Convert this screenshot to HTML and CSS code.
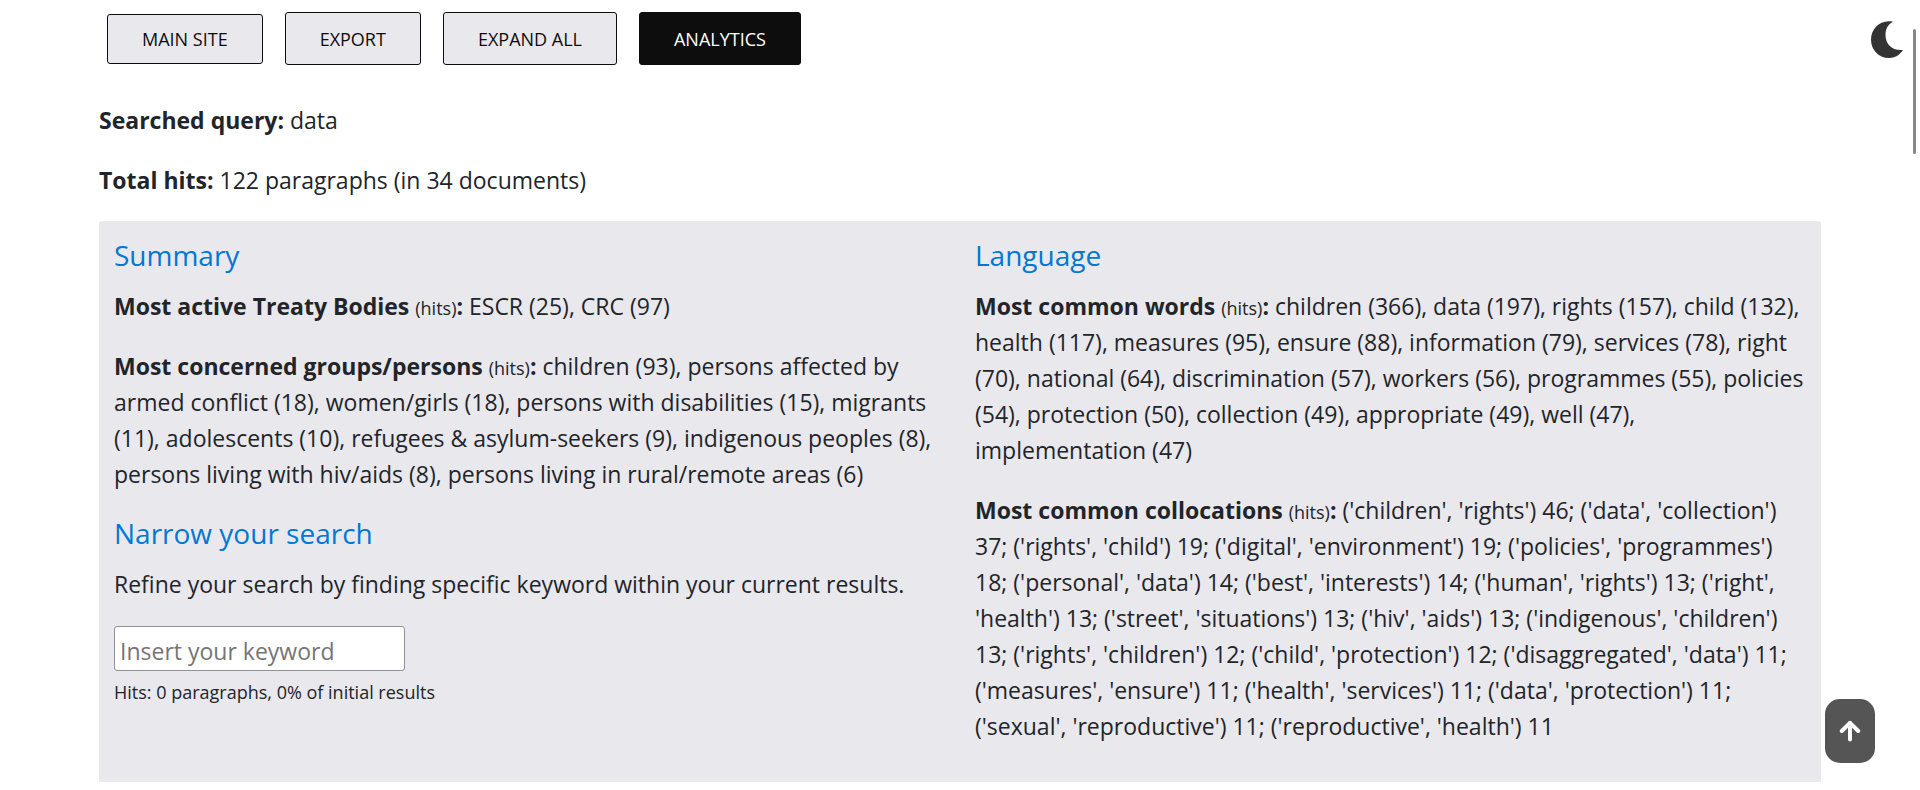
FILE: index.html
```html
<!DOCTYPE html>
<html lang="en">
<head>
<meta charset="utf-8">
<title>Search results: data</title>
<link rel="stylesheet" href="styles.css">
</head>
<body>
<nav class="toolbar">
  <a class="btn btn-link" href="#">MAIN SITE</a>
  <button class="btn" type="button">EXPORT</button>
  <button class="btn" type="button">EXPAND ALL</button>
  <button class="btn btn-active" type="button">ANALYTICS</button>
</nav>
<main class="results">
  <div class="query">
    <p><b>Searched query:</b> data</p>
    <p><b>Total hits:</b> 122 paragraphs (in 34 documents)</p>
  </div>
  <div class="panel">
    <section class="column">
      <h2>Summary</h2>
      <p><b>Most active Treaty Bodies <small>(hits)</small>:</b> ESCR (25), CRC (97)</p>
      <p><b>Most concerned groups/persons <small>(hits)</small>:</b> children (93), persons affected by<br>armed conflict (18), women/girls (18), persons with disabilities (15), migrants<br>(11), adolescents (10), refugees &amp; asylum-seekers (9), indigenous peoples (8),<br>persons living with hiv/aids (8), persons living in rural/remote areas (6)</p>
      <h2>Narrow your search</h2>
      <p><label for="keyword">Refine your search by finding specific keyword within your current results.</label></p>
      <input class="keyword" id="keyword" type="text" placeholder="Insert your keyword">
      <p class="hits">Hits: 0 paragraphs, 0% of initial results</p>
    </section>
    <section class="column">
      <h2>Language</h2>
      <p><b>Most common words <small>(hits)</small>:</b> children (366), data (197), rights (157), child (132),<br>health (117), measures (95), ensure (88), information (79), services (78), right<br>(70), national (64), discrimination (57), workers (56), programmes (55), policies<br>(54), protection (50), collection (49), appropriate (49), well (47),<br>implementation (47)</p>
      <p><b>Most common collocations <small>(hits)</small>:</b> ('children', 'rights') 46; ('data', 'collection')<br>37; ('rights', 'child') 19; ('digital', 'environment') 19; ('policies', 'programmes')<br>18; ('personal', 'data') 14; ('best', 'interests') 14; ('human', 'rights') 13; ('right',<br>'health') 13; ('street', 'situations') 13; ('hiv', 'aids') 13; ('indigenous', 'children')<br>13; ('rights', 'children') 12; ('child', 'protection') 12; ('disaggregated', 'data') 11;<br>('measures', 'ensure') 11; ('health', 'services') 11; ('data', 'protection') 11;<br>('sexual', 'reproductive') 11; ('reproductive', 'health') 11</p>
    </section>
  </div>
</main>
<button class="theme" type="button" aria-label="Dark mode">
  <svg width="34" height="38" viewBox="0 0 34 38"><path d="M23 1.800C18 4.500 15.500 9 15.500 15C15.500 24 22 31 33 30C29.800 35 24.800 38 19 38C9 38 1 30 1 19.700C1 8.500 10.500 -.8 23 1.800Z" fill="#333"/></svg>
</button>
<button class="to-top" type="button" aria-label="Back to top">
  <svg width="22" height="22" viewBox="0 0 22 22" fill="none" stroke="#fff" stroke-width="4" stroke-linejoin="round" stroke-linecap="round"><path d="M11 19.500V3"/><path d="M2.800 11L11 2.800L19.200 11"/></svg>
</button>
<div class="scroll-thumb"></div>
</body>
</html>
```

FILE: styles.css
```css
* {
  box-sizing: border-box;
}

body {
  margin: 0;
  background: #fff;
  color: #212529;
  font: 23px/36px "Open Sans", "Noto Sans", sans-serif;
  overflow: hidden;
}

.toolbar {
  display: flex;
  align-items: center;
  gap: 22px;
  padding: 12px 107px 0;
}

.btn {
  height: 53px;
  padding: 0 34px;
  border: 1px solid #0d0d0d;
  border-radius: 3px;
  background: #e9e8ed;
  color: #0d0d0d;
  font: 18px/48px "Open Sans", "Noto Sans", sans-serif;
  text-decoration: none;
}

.btn-link {
  height: 50px;
}

.btn-active {
  background: #0d0d0d;
  color: #fff;
}

.results {
  padding: 37px 99px 0;
}

p {
  margin: 0 0 24px;
}

.query p:last-child {
  margin-bottom: 23px;
}

small {
  font-size: 18px;
  font-weight: 400;
  line-height: 1;
}

.panel {
  display: grid;
  grid-template-columns: 1fr 1fr;
  padding: 17px 0 14px;
  border-radius: 3px 3px 0 0;
  background: #e9e8ed;
}

.column {
  padding: 0 15px;
  white-space: nowrap;
}

h2 {
  margin: 0 0 16px;
  color: #0078d4;
  font-size: 28px;
  font-weight: 400;
  line-height: 34px;
}

.keyword {
  display: block;
  width: 291px;
  height: 45px;
  padding: 4px 5px 0;
  border: 1px solid #8f8f9d;
  border-radius: 3px;
  background: #fff;
  color: #212529;
  font: inherit;
}

.keyword::placeholder {
  color: #757575;
  opacity: 1;
}

.hits {
  margin: 3px 0 0;
  font-size: 18px;
}

.theme,
.to-top {
  position: fixed;
  display: flex;
  align-items: center;
  justify-content: center;
  padding: 0;
  border: 0;
}

.theme {
  top: 20px;
  right: 16px;
  background: none;
}

.to-top {
  right: 45px;
  bottom: 27px;
  width: 50px;
  height: 64px;
  border-radius: 15px;
  background: #555;
}

.scroll-thumb {
  position: fixed;
  top: 29px;
  right: 4px;
  width: 3px;
  height: 125px;
  border-radius: 2px;
  background: #868686;
}
```
